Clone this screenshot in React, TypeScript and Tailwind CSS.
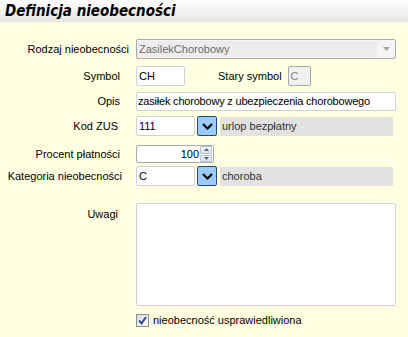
import React from "react";

const font = { fontFamily: '"Liberation Sans", Arial, sans-serif' };

function Chevron() {
  return (
    <svg width="11" height="7" viewBox="0 0 11 7">
      <path d="M1 1 L5.5 5.5 L10 1" fill="none" stroke="#000" strokeWidth="2.2" />
    </svg>
  );
}

function LookupField({ code, name }: { code: string; name: string }) {
  return (
    <div className="flex h-[20px] items-center">
      <div className="flex h-[20px] w-[59px] items-center rounded-[2px] border border-[#cfd3d8] bg-white px-[2px] text-[11px] text-black">
        {code}
      </div>
      <div className="ml-[2px] flex h-[20px] w-[20px] items-center justify-center rounded-[2px] border border-[#1e4a86] bg-[#9dcbf7]">
        <Chevron />
      </div>
      <div className="ml-[3px] flex h-[19px] w-[173px] items-center bg-[#e2e2e2] px-[2px] text-[11px] text-[#303030]">
        {name}
      </div>
    </div>
  );
}

function Label({ text, pr = "pr-[16px]", align = "items-center" }: { text: string; pr?: string; align?: string }) {
  return (
    <div className={`flex w-[136px] shrink-0 justify-end ${align} ${pr} text-[11px] text-black`}>{text}</div>
  );
}

export default function App() {
  return (
    <div className="h-[337px] w-[408px] overflow-hidden bg-[#ffffe1]" style={font}>
      <div className="flex h-[22px] items-center bg-gradient-to-b from-[#fefefe] to-[#e6e6e6] pl-[5px]">
        <span
          className="text-[15px] font-bold italic leading-none text-black"
          style={{ fontFamily: '"DejaVu Sans Condensed", "DejaVu Sans", Verdana, sans-serif', fontStretch: "condensed" }}
        >
          Definicja nieobecności
        </span>
      </div>

      <div className="flex flex-col">
        {/* Rodzaj nieobecności */}
        <div className="mt-[17px] flex h-[20px]">
          <Label text="Rodzaj nieobecności" pr="pr-[7px]" />
          <div className="flex h-[20px] w-[260px] items-center rounded-[2px] border border-[#a9a9a9] bg-[#f4f4f4]">
            <div className="flex h-[16px] w-[240px] items-center bg-[#ececec] pl-[2px] text-[11px] text-[#6d6d6d]">
              ZasilekChorobowy
            </div>
            <div className="flex flex-1 items-center justify-center">
              <svg width="7" height="4" viewBox="0 0 7 4">
                <path d="M0 0 H7 L3.5 4 Z" fill="#a0a0a0" />
              </svg>
            </div>
          </div>
        </div>

        {/* Symbol */}
        <div className="mt-[7px] flex h-[20px]">
          <Label text="Symbol" />
          <div className="flex h-[20px] w-[49px] items-center rounded-[2px] border border-[#cfd3d8] bg-white px-[2px] text-[11px] text-black">
            CH
          </div>
          <div className="ml-[33px] flex items-center text-[11px] text-black">Stary symbol</div>
          <div className="ml-[6px] flex h-[20px] w-[23px] items-center rounded-[2px] border border-[#a9a9a9] bg-[#f0f0f0] px-[2px] text-[11px] text-[#8a8a8a]">
            C
          </div>
        </div>

        {/* Opis */}
        <div className="mt-[6px] flex h-[19px]">
          <Label text="Opis" />
          <div className="flex h-[19px] w-[260px] items-center rounded-[2px] border border-[#cfd3d8] bg-white px-[1px] text-[11px] tracking-[-0.2px] text-black">
            zasiłek chorobowy z ubezpieczenia chorobowego
          </div>
        </div>

        {/* Kod ZUS */}
        <div className="mt-[5px] flex h-[20px]">
          <Label text="Kod ZUS" pr="pr-[18px]" />
          <LookupField code="111" name="urlop bezpłatny" />
        </div>

        {/* Procent płatności */}
        <div className="mt-[9px] flex h-[18px]">
          <Label text="Procent płatności" />
          <div className="flex h-[18px] w-[78px] items-center rounded-[2px] border border-[#a9a9a9] bg-white">
            <div className="flex-1 pr-[1px] text-right text-[11px] text-black">100</div>
            <div className="mr-[1px] flex h-[16px] w-[12px] flex-col gap-[1px]">
              <div className="flex flex-1 items-center justify-center rounded-[1px] border border-[#b5c3d3] bg-gradient-to-b from-[#f4f7fb] to-[#d9e3ee]">
                <svg width="5" height="3" viewBox="0 0 5 3">
                  <path d="M0 3 H5 L2.5 0 Z" fill="#4d6185" />
                </svg>
              </div>
              <div className="flex flex-1 items-center justify-center rounded-[1px] border border-[#b5c3d3] bg-gradient-to-b from-[#f4f7fb] to-[#d9e3ee]">
                <svg width="5" height="3" viewBox="0 0 5 3">
                  <path d="M0 0 H5 L2.5 3 Z" fill="#4d6185" />
                </svg>
              </div>
            </div>
          </div>
        </div>

        {/* Kategoria nieobecności */}
        <div className="mt-[3px] flex h-[20px]">
          <Label text="Kategoria nieobecności" pr="pr-[14px]" />
          <LookupField code="C" name="choroba" />
        </div>

        {/* Uwagi */}
        <div className="mt-[17px] flex h-[103px]">
          <Label text="Uwagi" pr="pr-[18px]" align="items-start pt-[3px]" />
          <div className="h-[103px] w-[260px] rounded-[2px] border border-[#cfd3d8] bg-white" />
        </div>

        {/* Checkbox */}
        <div className="mt-[8px] flex h-[13px] items-center pl-[136px]">
          <div className="flex h-[13px] w-[13px] items-center justify-center border border-[#8e8f8f] bg-gradient-to-br from-[#dcdcdc] to-[#fafafa]">
            <svg width="9" height="9" viewBox="0 0 9 9">
              <path d="M1 4.5 L3.5 7.5 L8 1" fill="none" stroke="#21439c" strokeWidth="1.8" />
            </svg>
          </div>
          <span className="ml-[4px] text-[11px] text-black">nieobecność usprawiedliwiona</span>
        </div>
      </div>
    </div>
  );
}
